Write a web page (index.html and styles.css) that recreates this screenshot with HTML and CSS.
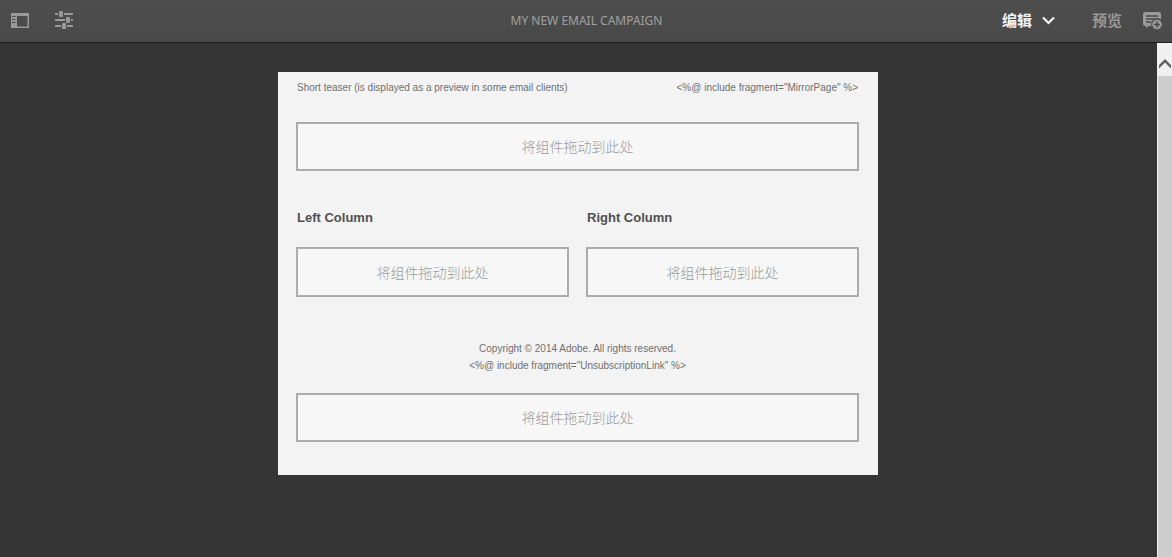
FILE: index.html
```html
<!DOCTYPE html>
<html lang="zh-CN">
<head>
<meta charset="utf-8">
<title>MY NEW EMAIL CAMPAIGN</title>
<link rel="stylesheet" href="styles.css">
</head>
<body>
<header class="toolbar">
  <div class="tools">
    <button class="icon-button" type="button" aria-label="Side panel">
      <svg width="20" height="18" viewBox="0 0 20 18"><path fill="currentColor" fill-rule="evenodd" d="M1 2h18v15H1zM7 5v10.500h10.500V5zM2 5v1h3.500v-1zM2 8v1h3.500v-1zM2 11v1h3.500v-1z"/></svg>
    </button>
    <button class="icon-button" type="button" aria-label="Page properties">
      <svg width="20" height="18" viewBox="0 0 20 18" fill="currentColor"><path d="M1 2h3v2H1zM10 2h9v2h-9zM1 8h10v2H1zM17 8h2v2h-2zM1 14h6v2H1zM13 14h6v2h-6z"/><rect x="5" y="0" width="4" height="6" rx="1"/><rect x="12" y="6" width="4" height="6" rx="1"/><rect x="8" y="12" width="4" height="6" rx="1"/></svg>
    </button>
  </div>
  <h1 class="title">MY NEW EMAIL CAMPAIGN</h1>
  <div class="modes">
    <button class="mode mode-active" type="button">编辑
      <svg width="13" height="9" viewBox="0 0 13 9" fill="none" stroke="currentColor" stroke-width="2.200"><path d="M1 1.500l5.500 5.500L12 1.500"/></svg>
    </button>
    <button class="mode" type="button">预览</button>
    <button class="icon-button" type="button" aria-label="Add annotation">
      <svg width="20" height="20" viewBox="0 -2 20 20"><path fill="currentColor" d="M2 0h14a2 2 0 0 1 2 2v5.500a6 6 0 0 0-9.500 6.500H6l-3 2v-2H2a2 2 0 0 1-2-2V2a2 2 0 0 1 2-2z"/><path stroke="#4b4b4b" stroke-width="1.500" d="M3 4h12M3 7h9M3 10h5"/><circle cx="14" cy="12.500" r="4.800" fill="currentColor"/><path stroke="#4b4b4b" stroke-width="1.500" d="M11 12.500h6M14 9.500v6"/></svg>
    </button>
  </div>
</header>
<div class="workspace">
  <main class="canvas">
    <article class="email">
      <div class="preheader">
        <p>Short teaser (is displayed as a preview in some email clients)</p>
        <p>&lt;%@ include fragment="MirrorPage" %&gt;</p>
      </div>
      <div class="dropzone">将组件拖动到此处</div>
      <div class="columns">
        <section>
          <h2>Left Column</h2>
          <div class="dropzone">将组件拖动到此处</div>
        </section>
        <section>
          <h2>Right Column</h2>
          <div class="dropzone">将组件拖动到此处</div>
        </section>
      </div>
      <footer class="legal">
        <p>Copyright © 2014 Adobe. All rights reserved.</p>
        <p>&lt;%@ include fragment="UnsubscriptionLink" %&gt;</p>
      </footer>
      <div class="dropzone">将组件拖动到此处</div>
    </article>
  </main>
  <div class="scrollbar">
    <button class="scroll-up" type="button" aria-label="Scroll up">
      <svg width="12" height="10" viewBox="0 0 12 10"><path fill="#606060" d="M0 6l6-6 6 6v3.500l-6-6-6 6z"/></svg>
    </button>
    <div class="scroll-thumb"></div>
  </div>
</div>
</body>
</html>
```
FILE: styles.css
```css
* {
  box-sizing: border-box;
}

body {
  margin: 0;
  min-height: 100vh;
  display: flex;
  flex-direction: column;
  background: #353535;
  font-family: "Liberation Sans", "Noto Sans CJK SC", sans-serif;
}

h1, h2, p {
  margin: 0;
}

button {
  padding: 0;
  border: 0;
  background: none;
  color: inherit;
  font: inherit;
}

svg {
  display: block;
}

.toolbar {
  display: grid;
  grid-template-columns: 1fr auto 1fr;
  align-items: center;
  height: 43px;
  padding: 0 9px 0 10px;
  border-bottom: 1px solid #202020;
  background: linear-gradient(#4e4e4e, #494949);
  color: #999;
}

.tools {
  display: flex;
  align-items: center;
  gap: 24px;
  padding-bottom: 2px;
}

.title {
  font: 12px/18px "Noto Sans", sans-serif;
  color: #a0a0a0;
}

.modes {
  display: flex;
  justify-content: flex-end;
  align-items: center;
  padding-bottom: 2px;
}

.mode {
  display: flex;
  align-items: center;
  gap: 10px;
  margin-right: 21px;
  font: bold 15px/22px "Noto Sans CJK SC", sans-serif;
}

.mode-active {
  margin-right: 37px;
  color: #f2f2f2;
}

.workspace {
  flex: 1;
  display: flex;
}

.canvas {
  flex: 1;
  padding: 28px 17px 28px 16px;
  border-top: 1px solid #303030;
}

.email {
  max-width: 600px;
  margin: 0 auto;
  padding: 7px 19px 33px 18px;
  background: #f3f3f3;
  color: #707070;
  font-size: 10px;
  line-height: 17px;
}

.preheader {
  display: flex;
  justify-content: space-between;
  padding: 0 1px;
  margin-bottom: 26px;
}

.dropzone {
  padding: 12px 0;
  border: 2px solid #acacac;
  background: #f7f7f7;
  color: #9c9c9c;
  font: 300 14px/21px "Noto Sans CJK SC", sans-serif;
  text-align: center;
}

.columns {
  display: grid;
  grid-template-columns: 1fr 1fr;
  gap: 17px;
  margin: 37px 0 43px;
}

.columns .dropzone {
  padding-top: 13px;
}

.columns h2 {
  margin-bottom: 19px;
  padding-left: 1px;
  color: #505050;
  font-size: 13px;
  line-height: 20px;
}

.legal {
  margin-bottom: 19px;
  text-align: center;
}

.scrollbar {
  width: 15px;
  display: flex;
  flex-direction: column;
  padding-left: 1px;
  background: #f0f0f0;
}

.scroll-up {
  height: 33px;
  padding: 8px 0 0 1px;
}

.scroll-thumb {
  flex: 1;
  background: #cdcdcd;
}
```
